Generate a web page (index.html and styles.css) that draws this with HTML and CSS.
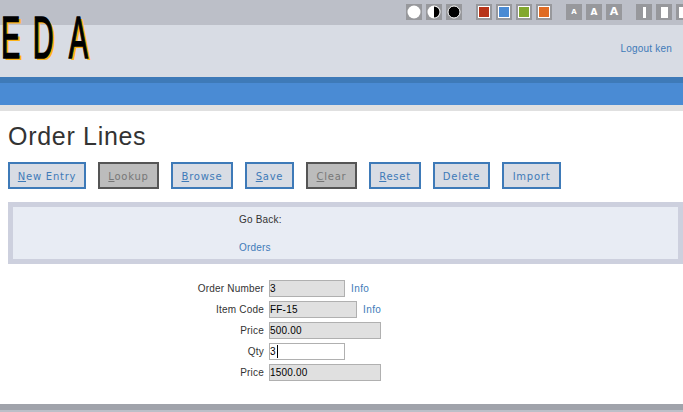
FILE: index.html
```html
<!DOCTYPE html>
<html lang="en">
<head>
<meta charset="utf-8">
<title>Order Lines</title>
<link rel="stylesheet" href="styles.css">
</head>
<body>
<div class="logo">E<span class="logo-d">D</span><span class="logo-a">A</span></div>
<div class="topbar">
  <div class="swatches">
    <div class="group">
      <span class="sq"><svg width="16" height="16" viewBox="0 0 16 16"><circle cx="8" cy="8" r="6.5" fill="#fff"/></svg></span>
      <span class="sq"><svg width="16" height="16" viewBox="0 0 16 16"><circle cx="8" cy="8" r="6.5" fill="#fff"/><path d="M8 2.5a5.5 5.5 0 0 1 0 11z" fill="#000"/></svg></span>
      <span class="sq"><svg width="16" height="16" viewBox="0 0 16 16"><circle cx="8" cy="8" r="6" fill="#000" stroke="#fff"/></svg></span>
    </div>
    <div class="group">
      <span class="sq"><span class="col col-red"></span></span>
      <span class="sq"><span class="col col-blue"></span></span>
      <span class="sq"><span class="col col-green"></span></span>
      <span class="sq"><span class="col col-orange"></span></span>
    </div>
    <div class="group">
      <span class="sq sq-a a-s">A</span>
      <span class="sq sq-a a-m">A</span>
      <span class="sq sq-a a-l">A</span>
    </div>
    <div class="group">
      <span class="sq"><span class="w w-s"></span></span>
      <span class="sq"><span class="w w-m"></span></span>
      <span class="sq"><span class="w w-l"></span></span>
    </div>
  </div>
</div>
<header class="header"><a class="logout" href="#">Logout ken</a></header>
<div class="band"></div>
<div class="rule"></div>
<main class="main">
  <h1 class="title">Order Lines</h1>
  <div class="buttons">
    <a class="btn" href="#"><u>N</u>ew Entry</a>
    <a class="btn off" href="#"><u>L</u>ookup</a>
    <a class="btn" href="#"><u>B</u>rowse</a>
    <a class="btn" href="#"><u>S</u>ave</a>
    <a class="btn off" href="#"><u>C</u>lear</a>
    <a class="btn" href="#"><u>R</u>eset</a>
    <a class="btn" href="#">Delete</a>
    <a class="btn" href="#">Import</a>
  </div>
  <section class="panel">
    <div class="panel-label">Go Back:</div>
    <a class="panel-link" href="#">Orders</a>
  </section>
  <form class="form">
    <label class="lbl">Order Number</label>
    <div class="field"><input class="inp ro w76" value="3" readonly><a class="info" href="#">Info</a></div>
    <label class="lbl">Item Code</label>
    <div class="field"><input class="inp ro w88" value="FF-15" readonly><a class="info" href="#">Info</a></div>
    <label class="lbl">Price</label>
    <div class="field"><input class="inp ro w112" value="500.00" readonly></div>
    <label class="lbl">Qty</label>
    <div class="field qty"><input class="inp w76" value="3"><span class="caret"></span></div>
    <label class="lbl">Price</label>
    <div class="field"><input class="inp ro w112" value="1500.00" readonly></div>
  </form>
</main>
<footer class="footer"></footer>
</body>
</html>
```
FILE: styles.css
```css
html, body { margin: 0; padding: 0; }
body {
  width: 683px;
  height: 412px;
  overflow: hidden;
  position: relative;
  background: #fff;
  font-family: "Liberation Sans", Arial, sans-serif;
  font-size: 10px;
  letter-spacing: 0.2px;
  color: #333;
}
a { color: #3e7ab8; text-decoration: none; }

.topbar {
  height: 25px;
  background: #bcbfc8;
  display: flex;
  align-items: flex-start;
}
.swatches {
  display: flex;
  gap: 14px;
  padding: 4px 0 0 406px;
}
.group { display: flex; gap: 4px; }
.sq {
  width: 16px;
  height: 16px;
  flex: none;
  background: #97989c;
  display: flex;
  align-items: center;
  justify-content: center;
}
.col { width: 12px; height: 12px; box-sizing: border-box; border: 1px solid #fff; }
.col-red { background: #b83418; }
.col-blue { background: #4a8bd4; }
.col-green { background: #82a82e; }
.col-orange { background: #e06c24; }
.sq-a {
  color: #fff;
  font-family: "DejaVu Sans", sans-serif;
  font-weight: 700;
  letter-spacing: 0;
  line-height: 16px;
}
.a-s { font-size: 7px; }
.a-m { font-size: 9px; }
.a-l { font-size: 11px; }
.w { background: #fff; display: block; }
.w-s { width: 3px; height: 11px; }
.w-m { width: 7px; height: 11px; }
.w-l { width: 11px; height: 11px; }

.header {
  height: 52px;
  background: #d8dce4;
  display: flex;
  justify-content: flex-end;
  align-items: flex-start;
  padding-right: 11px;
}
.logout { margin-top: 17px; line-height: 13px; }
.band {
  height: 22px;
  background: #4a8bd4;
  border-top: 6px solid #3e7ab8;
}
.rule { height: 6px; background: #e0e0e0; }

.logo {
  position: absolute;
  left: 1px;
  top: 5px;
  font-family: "Liberation Sans", sans-serif;
  font-weight: 400;
  font-size: 60px;
  line-height: 66px;
  letter-spacing: 0;
  color: #000;
  -webkit-text-stroke: 1.5px #000;
  text-shadow: 5px 2px 0 #fcb316;
  transform: scaleX(0.48);
  transform-origin: 0 0;
  white-space: nowrap;
  z-index: 2;
}
.logo-d { margin-left: 26px; }
.logo-a { margin-left: 32px; }

.main { padding: 0 0 0 8px; }
.title {
  margin: 0;
  padding-top: 10px;
  height: 35px;
  font-size: 25px;
  line-height: 30px;
  font-weight: 400;
  letter-spacing: 0.7px;
  color: #333;
}
.buttons {
  display: grid;
  grid-template-columns: 78px 61px 62px 49px 51px 52px 57px 59px;
  gap: 12px;
  margin-top: 6px;
}
.btn {
  box-sizing: border-box;
  height: 27px;
  border: 2px solid #3e7ab8;
  background: #d8dce4;
  font-family: "DejaVu Sans", sans-serif;
  font-size: 10px;
  letter-spacing: 0.75px;
  line-height: 25px;
  text-align: center;
  white-space: nowrap;
  color: #3e7ab8;
}
.btn.off {
  border-color: #555;
  background: #bcbcbc;
  color: #777;
}
.panel {
  box-sizing: border-box;
  width: 675px;
  height: 62px;
  margin-top: 13px;
  border: 5px solid #cdd0de;
  background: #e8ecf4;
  padding: 6px 0 0 226px;
  line-height: 13px;
}
.panel-label { height: 28px; }
.panel-link { display: block; }

.form {
  display: grid;
  grid-template-columns: 256px 1fr;
  grid-auto-rows: 21px;
  column-gap: 5px;
  margin-top: 15px;
  padding-bottom: 24px;
  width: 675px;
}
.lbl { text-align: right; line-height: 19px; }
.field { display: flex; align-items: flex-start; position: relative; }
.inp {
  box-sizing: border-box;
  height: 17px;
  margin: 1px 0 0;
  padding: 0;
  border: 1px solid #b0b0b0;
  background: #fff;
  font: 10px "Liberation Sans", sans-serif;
  letter-spacing: 0.2px;
  color: #000;
  outline: none;
}
.ro { background: #e0e0e0; }
.w76 { width: 76px; }
.w88 { width: 88px; }
.w112 { width: 112px; }
.info { margin-left: 6px; line-height: 19px; letter-spacing: 0.4px; }
.caret {
  position: absolute;
  left: 8px;
  top: 3px;
  width: 1px;
  height: 13px;
  background: #000;
}
.footer {
  position: absolute;
  left: 0;
  right: 0;
  top: 404px;
  height: 8px;
  background: #bcbfc8;
  border-top: 6px solid #a0a3ab;
  box-sizing: border-box;
}
```
